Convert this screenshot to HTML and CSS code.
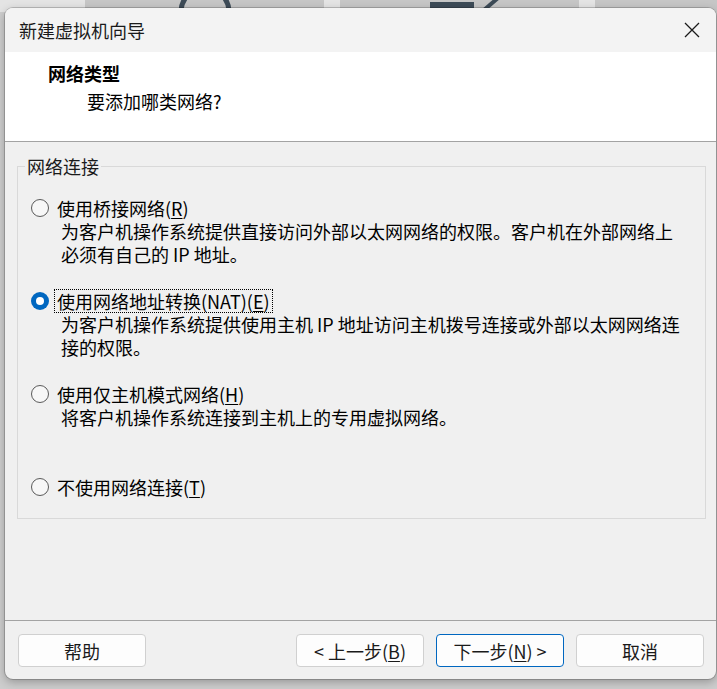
FILE: index.html
```html
<!DOCTYPE html>
<html lang="zh-CN">
<head>
<meta charset="utf-8">
<title>新建虚拟机向导</title>
<link rel="stylesheet" href="styles.css">
</head>
<body>
<div class="desktop">
  <div class="band">
    <div class="gap g1"></div>
    <div class="tile t1">
      <svg class="icon-arc" width="60" height="10" viewBox="0 0 60 10"><path d="M6 12 A24 24 0 0 1 54 12" fill="none" stroke="#3d4b57" stroke-width="5"/></svg>
    </div>
    <div class="gap"></div>
    <div class="tile t2">
      <svg class="icon-pen" width="80" height="10" viewBox="0 0 80 10"><rect x="2" y="4" width="44" height="6" fill="#3d4b57"/><path d="M56 12 L70 0" stroke="#3d4b57" stroke-width="4"/></svg>
    </div>
    <div class="gap"></div>
    <div class="tile t3"></div>
  </div>
</div>

<div class="dialog">
  <div class="titlebar">
    <span class="title">新建虚拟机向导</span>
    <svg class="close" width="16" height="16" viewBox="0 0 16 16"><path d="M1 1 L15 15 M15 1 L1 15" stroke="#1a1a1a" stroke-width="1.3" fill="none"/></svg>
  </div>
  <div class="header">
    <div class="h-title">网络类型</div>
    <div class="h-sub">要添加哪类网络?</div>
  </div>
  <div class="body">
    <fieldset class="group">
      <legend class="legend">网络连接</legend>
      <div class="options">
        <div class="option">
          <div class="row">
            <span class="radio"></span>
            <span class="label">使用桥接网络(<u>R</u>)</span>
          </div>
          <div class="desc">为客户机操作系统提供直接访问外部以太网网络的权限。客户机在外部网络上<br>必须有自己的 IP 地址。</div>
        </div>
        <div class="option">
          <div class="row">
            <span class="radio checked"></span>
            <span class="label focus">使用网络地址转换(NAT)(<u>E</u>)</span>
          </div>
          <div class="desc">为客户机操作系统提供使用主机 IP 地址访问主机拨号连接或外部以太网网络连<br>接的权限。</div>
        </div>
        <div class="option">
          <div class="row">
            <span class="radio"></span>
            <span class="label">使用仅主机模式网络(<u>H</u>)</span>
          </div>
          <div class="desc">将客户机操作系统连接到主机上的专用虚拟网络。</div>
        </div>
        <div class="option last">
          <div class="row">
            <span class="radio"></span>
            <span class="label">不使用网络连接(<u>T</u>)</span>
          </div>
        </div>
      </div>
    </fieldset>
  </div>
  <div class="footer">
    <button class="btn">帮助</button>
    <div class="spacer"></div>
    <button class="btn">&lt; 上一步(<u>B</u>)</button>
    <button class="btn default">下一步(<u>N</u>) &gt;</button>
    <button class="btn">取消</button>
  </div>
</div>
</body>
</html>
```
FILE: styles.css
```css
* { box-sizing: border-box; }
html, body {
  margin: 0;
  padding: 0;
  width: 717px;
  height: 689px;
  overflow: hidden;
}
body {
  background: #cdcdcd;
  font-family: "Noto Sans CJK SC", "Noto Sans", sans-serif;
  color: #000;
  position: relative;
}
.desktop {
  height: 689px;
}
.band {
  display: flex;
  height: 12px;
}
.gap { width: 16px; background: #e4e4e4; }
.g1 { width: 85px; }
.tile { background: #c6c6c6; position: relative; overflow: hidden; }
.t1 { width: 239px; }
.t2 { width: 239px; }
.t3 { flex: 1; }
.icon-arc { position: absolute; left: 90px; top: 0; }
.icon-pen { position: absolute; left: 88px; top: -2px; }

.dialog {
  position: absolute;
  left: 5px;
  top: 8px;
  width: 711px;
  height: 671px;
  background: #f0f0f0;
  border-radius: 8px;
  box-shadow: 0 0 0 1px rgba(0,0,0,0.18), 0 3px 10px rgba(0,0,0,0.28);
  display: flex;
  flex-direction: column;
  overflow: hidden;
}
.titlebar {
  height: 44px;
  flex: none;
  background: #f3f3f3;
  display: flex;
  align-items: center;
  justify-content: space-between;
  padding: 0 16px 0 14px;
}
.title {
  font-size: 18px;
  line-height: 24px;
  color: #1a1a1a;
  margin-top: -1px;
}
.close { display: block; margin-top: 0; }

.header {
  height: 90px;
  flex: none;
  background: #fff;
  border-bottom: 1px solid #a3a3a3;
  padding-top: 10px;
}
.h-title {
  font-size: 18px;
  line-height: 23px;
  font-weight: bold;
  padding-left: 43px;
}
.h-sub {
  font-size: 18px;
  line-height: 23px;
  padding-left: 82px;
  margin-top: 5px;
}

.body {
  flex: 1;
  padding: 13px 10px 0 12px;
}
.group {
  margin: 0;
  padding: 0;
  border: 1px solid #d9d9d9;
  min-width: 0;
}
.legend {
  margin-left: 7px;
  padding: 0 2px;
  font-size: 18px;
  line-height: 23px;
  color: #1a1a1a;
}
.options {
  padding: 18px 0 19px 13px;
}
.option { height: 93px; }
.option.last { height: auto; }
.row {
  display: flex;
  align-items: center;
  height: 24px;
}
.radio {
  width: 18px;
  height: 18px;
  border-radius: 50%;
  border: 1.4px solid #5a5a5a;
  background: #f7f7f7;
  flex: none;
  margin-right: 5px;
  position: relative;
}
.radio.checked {
  border: none;
  background: #0067c0;
}
.radio.checked::after {
  content: "";
  position: absolute;
  left: 5px;
  top: 5px;
  width: 8px;
  height: 8px;
  border-radius: 50%;
  background: #fff;
}
.label {
  font-size: 18px;
  line-height: 22px;
  padding: 0 2px;
  border: 1px dotted transparent;
  white-space: nowrap;
}
.label.focus { border-color: #000; }
.label u, .btn u { text-decoration-thickness: 1px; text-underline-offset: 2px; }
.desc {
  font-size: 18px;
  line-height: 23px;
  padding-left: 30px;
  white-space: nowrap;
}

.footer {
  height: 59px;
  flex: none;
  border-top: 1px solid #a3a3a3;
  display: flex;
  align-items: flex-start;
  gap: 12px;
  padding: 13px 12px 0 13px;
}
.spacer { flex: 1; }
.btn {
  width: 128px;
  height: 33px;
  background: #fdfdfd;
  border: 1px solid #d0d0d0;
  border-radius: 4px;
  font-family: inherit;
  font-size: 18px;
  line-height: 22px;
  color: #1a1a1a;
  padding: 0;
}
.btn.default { border-color: #0067c0; }
```
